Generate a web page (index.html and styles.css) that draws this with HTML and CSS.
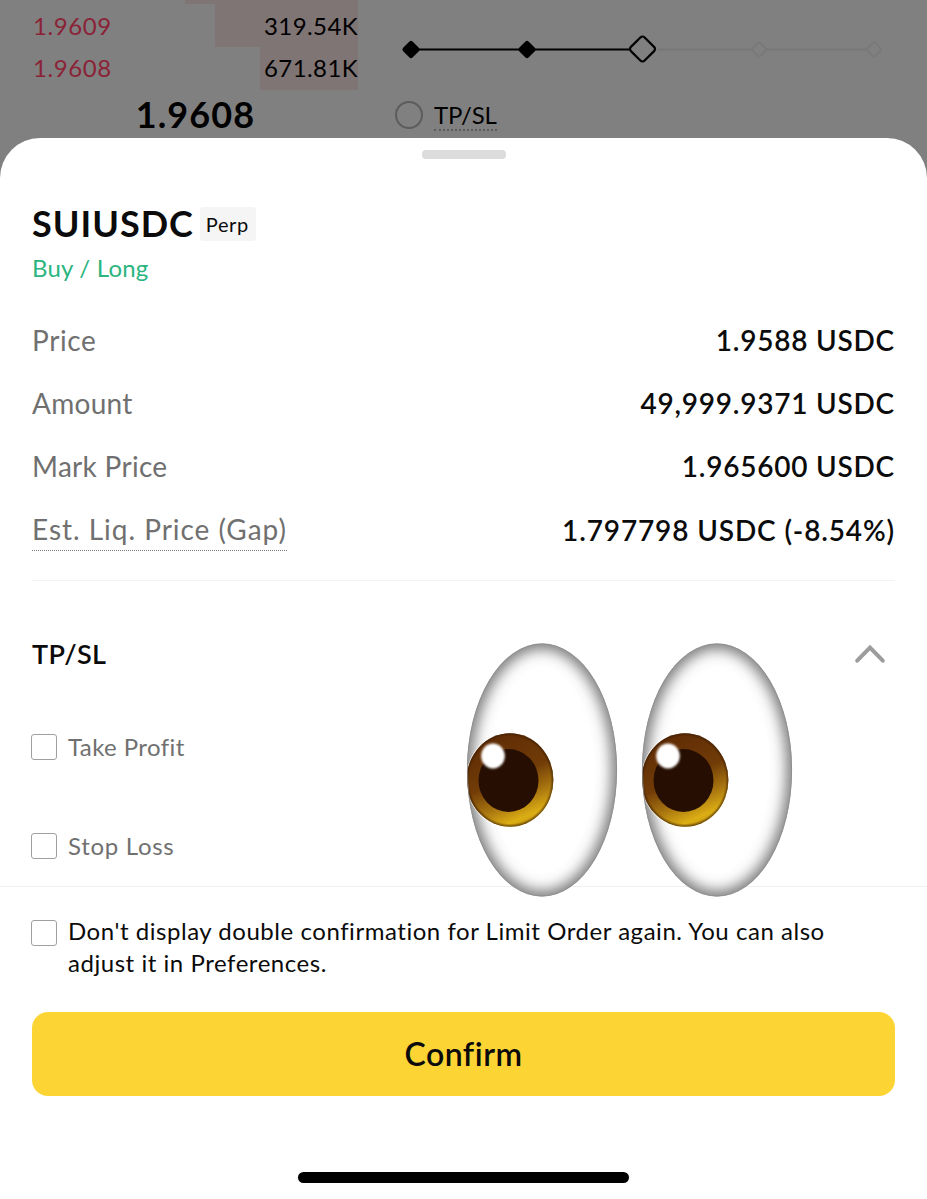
FILE: index.html
```
<!DOCTYPE html>
<html lang="en">
<head>
    <meta charset="UTF-8">
    <meta name="viewport" content="width=device-width, initial-scale=1.0">
    <title>Order Confirmation</title>
    <link rel="stylesheet" href="styles.css">
</head>
<body>
    <!-- Trading screen behind the sheet -->
    <div class="backdrop">
        <div class="order-book">
            <div class="book-row book-row-cut">
                <span class="depth" style="width: 173px"></span>
            </div>
            <div class="book-row">
                <span class="depth" style="width: 143px"></span>
                <span class="book-price">1.9609</span>
                <span class="book-amount">319.54K</span>
            </div>
            <div class="book-row book-row-last">
                <span class="depth" style="width: 98px"></span>
                <span class="book-price">1.9608</span>
                <span class="book-amount">671.81K</span>
            </div>
            <div class="last-price">1.9608</div>
        </div>

        <div class="order-form">
            <svg class="slider" width="500" height="40" viewBox="0 0 500 40" fill="none">
                <path d="M262 20.5H358M370 20.5H474" stroke="#777" stroke-width="2"/>
                <path d="M16 20.5H234" stroke="#000" stroke-width="2.2"/>
                <rect x="-6.8" y="-6.8" width="13.6" height="13.6" rx="2.5" transform="translate(16 20.5) rotate(45)" fill="#000"/>
                <rect x="-6.8" y="-6.8" width="13.6" height="13.6" rx="2.5" transform="translate(132 20.5) rotate(45)" fill="#000"/>
                <rect x="-9.7" y="-9.7" width="19.4" height="19.4" rx="3" transform="translate(247.5 20) rotate(45)" fill="#808080" stroke="#000" stroke-width="2.2"/>
                <rect x="-5.5" y="-5.5" width="11" height="11" rx="2" transform="translate(364 20.5) rotate(45)" fill="#808080" stroke="#797979" stroke-width="2"/>
                <rect x="-5.5" y="-5.5" width="11" height="11" rx="2" transform="translate(479 20.5) rotate(45)" fill="#808080" stroke="#797979" stroke-width="2"/>
            </svg>
            <div class="tpsl-toggle">
                <span class="radio"></span>
                <span class="tpsl-label">TP/SL</span>
            </div>
        </div>
    </div>

    <!-- Confirmation sheet -->
    <div class="sheet">
        <div class="handle"></div>

        <div class="content">
            <div class="heading">
                <h1 class="symbol">SUIUSDC</h1>
                <span class="tag">Perp</span>
            </div>
            <div class="side">Buy / Long</div>

            <div class="details">
                <div class="detail">
                    <span class="label label-price">Price</span>
                    <span class="value">1.9588 USDC</span>
                </div>
                <div class="detail">
                    <span class="label">Amount</span>
                    <span class="value">49,999.9371 USDC</span>
                </div>
                <div class="detail">
                    <span class="label">Mark Price</span>
                    <span class="value">1.965600 USDC</span>
                </div>
                <div class="detail">
                    <span class="label label-dotted">Est. Liq. Price (Gap)</span>
                    <span class="value value-gap">1.797798 USDC (-8.54%)</span>
                </div>
            </div>

            <div class="tpsl">
                <div class="tpsl-header">
                    <h2 class="tpsl-title">TP/SL</h2>
                    <svg class="chevron" width="32" height="20" viewBox="0 0 32 20" fill="none">
                        <path d="M3.2 16.7L16 3.6L28.8 16.7" stroke="#9c9c9c" stroke-width="4" stroke-linecap="round"/>
                    </svg>
                </div>
                <div class="option option-profit">
                    <span class="checkbox"></span>
                    <span class="option-label">Take Profit</span>
                </div>
                <div class="option option-loss">
                    <span class="checkbox"></span>
                    <span class="option-label">Stop Loss</span>
                </div>

                <!-- Eyes sticker -->
                <svg class="eyes" width="328" height="256" viewBox="0 0 328 256">
                    <defs>
                        <clipPath id="eyeClip">
                            <ellipse cx="76" cy="128" rx="75" ry="126.5"/>
                        </clipPath>
                        <filter id="soft" x="-20%" y="-20%" width="140%" height="140%">
                            <feGaussianBlur stdDeviation="8"/>
                        </filter>
                        <filter id="glint" x="-30%" y="-30%" width="160%" height="160%">
                            <feGaussianBlur stdDeviation="1.2"/>
                        </filter>
                        <linearGradient id="iris" x1="0.3" y1="0.05" x2="0.68" y2="1">
                            <stop offset="0" stop-color="#602c05"/>
                            <stop offset="0.45" stop-color="#713c07"/>
                            <stop offset="0.7" stop-color="#a87510"/>
                            <stop offset="0.9" stop-color="#dcae14"/>
                            <stop offset="1" stop-color="#c0930e"/>
                        </linearGradient>
                        <radialGradient id="irisEdge">
                            <stop offset="0.93" stop-color="#3a1c00" stop-opacity="0"/>
                            <stop offset="1" stop-color="#3a1c00" stop-opacity="0.7"/>
                        </radialGradient>
                        <g id="eye">
                            <ellipse cx="76" cy="128" rx="75" ry="126.5" fill="#fff"/>
                            <g clip-path="url(#eyeClip)">
                                <ellipse cx="76" cy="128" rx="79" ry="130.5" fill="none" stroke="#555" stroke-width="15" filter="url(#soft)"/>
                                <ellipse cx="44" cy="138" rx="44" ry="48" fill="#fff" opacity="0.85"/>
                                <ellipse cx="44" cy="138" rx="43.4" ry="46.8" fill="url(#iris)"/>
                                <ellipse cx="44" cy="138" rx="43.4" ry="46.8" fill="url(#irisEdge)"/>
                                <ellipse cx="42.5" cy="138.5" rx="30" ry="31.5" fill="#260f02"/>
                                <ellipse cx="27" cy="114" rx="11.8" ry="12.5" fill="#fff" filter="url(#glint)"/>
                            </g>
                            <ellipse cx="76" cy="128" rx="74.6" ry="126.1" fill="none" stroke="#8d8d8d" stroke-width="0.8"/>
                        </g>
                    </defs>
                    <use href="#eye"/>
                    <use href="#eye" x="175"/>
                </svg>
            </div>
        </div>

        <div class="footer">
            <div class="agreement">
                <span class="checkbox"></span>
                <p class="agreement-text">Don't display double confirmation for Limit Order again. You can also<br>adjust it in Preferences.</p>
            </div>
            <button class="confirm">Confirm</button>
        </div>

        <div class="home-indicator"></div>
    </div>
</body>
</html>
```
FILE: styles.css
```
/* ===== RESET & BASE STYLES ===== */
* {
    margin: 0;
    padding: 0;
    box-sizing: border-box;
}

body {
    height: 1199px;
    overflow: hidden;
    font-family: Lato, "Open Sans", sans-serif;
    background: #808080;
    color: #0b0b0b;
}

/* ===== BACKDROP ===== */
.backdrop {
    display: flex;
    height: 138px;
    color: #000;
    font-size: 24px;
}

.order-book {
    width: 358px;
    padding-left: 33px;
}

.book-row {
    position: relative;
    display: flex;
    justify-content: space-between;
    height: 43px;
    line-height: 43px;
}

.book-row-cut {
    height: 4px;
}

.book-row-last {
    line-height: 41px;
}

.depth {
    position: absolute;
    top: 0;
    right: 0;
    height: 100%;
    background: #807575;
}

.book-price {
    color: #8b2337;
    letter-spacing: 0.6px;
}

.book-price,
.book-amount {
    position: relative;
}

.book-amount {
    letter-spacing: 0.4px;
}

.last-price {
    font-size: 36px;
    font-weight: 700;
    letter-spacing: 1.1px;
    line-height: 48px;
    text-align: center;
}

.order-form {
    flex: 1;
    padding: 29px 0 0 37px;
}

.slider {
    display: block;
}

.tpsl-toggle {
    display: flex;
    align-items: center;
    gap: 12px;
    margin-top: 30px;
}

.radio {
    width: 28px;
    height: 28px;
    border: 2px solid #5c5c5c;
    border-radius: 50%;
}

.tpsl-label {
    padding-top: 2px;
    margin-left: -1px;
    border-bottom: 2px dotted #5c5c5c;
    letter-spacing: -0.2px;
    line-height: 28px;
}

/* ===== SHEET ===== */
.sheet {
    display: flex;
    flex-direction: column;
    height: 1061px;
    background: #fff;
    border-radius: 40px 40px 0 0;
}

.handle {
    width: 84px;
    height: 9px;
    margin: 12px auto 0;
    border-radius: 4px;
    background: #dcdcdc;
}

.content {
    height: 727px;
    padding: 48px 32px 0;
}

.heading {
    display: flex;
    align-items: center;
    gap: 6px;
    height: 34px;
}

.symbol {
    padding-bottom: 2px;
    font-size: 36px;
    font-weight: 700;
    letter-spacing: 1px;
    line-height: 34px;
}

.tag {
    padding: 0 7px 0 6px;
    border-radius: 3px;
    background: #f5f5f5;
    font-size: 20px;
    letter-spacing: 0.6px;
    line-height: 34px;
}

.side {
    margin-top: 11px;
    color: #2ab57f;
    font-size: 24px;
    letter-spacing: 0.2px;
    line-height: 32px;
}

.details {
    padding-bottom: 19px;
    margin-top: 24px;
    border-bottom: 1px solid #f3f3f3;
}

.detail {
    display: flex;
    align-items: center;
    justify-content: space-between;
    height: 63.3px;
    font-size: 28px;
}

.label {
    color: #707070;
    letter-spacing: 0.3px;
}

.label-price {
    letter-spacing: 0.6px;
}

.label-dotted {
    padding-bottom: 4px;
    margin-top: 4px;
    border-bottom: 1.5px dotted #777;
    letter-spacing: 0.97px;
    line-height: 34px;
}

.value {
    font-weight: 600;
    letter-spacing: 0.78px;
}

.value-gap {
    letter-spacing: 0.87px;
}

/* ===== TP/SL ===== */
.tpsl {
    position: relative;
}

.tpsl-header {
    display: flex;
    align-items: center;
    justify-content: space-between;
    height: 34px;
    margin-top: 56px;
    padding-right: 9px;
}

.tpsl-title {
    padding-bottom: 2px;
    font-size: 27px;
    font-weight: 600;
    letter-spacing: 0.4px;
}

.option {
    display: flex;
    align-items: center;
    gap: 11px;
    height: 32px;
    color: #707070;
    font-size: 24px;
    letter-spacing: 0.4px;
}

.option-profit {
    margin-top: 59px;
}

.option-loss {
    margin-top: 67px;
    letter-spacing: 0.7px;
}

.checkbox {
    flex: none;
    width: 26px;
    height: 26px;
    margin-left: -1px;
    border: 1.5px solid #a0a0a0;
    border-radius: 3px;
}

.option .checkbox {
    margin-top: 2px;
}

.eyes {
    position: absolute;
    left: 434px;
    top: 5px;
}

/* ===== FOOTER ===== */
.footer {
    padding: 28px 32px 0;
    border-top: 1px solid #f0f0f0;
}

.agreement {
    display: flex;
    gap: 11px;
}

.agreement .checkbox {
    margin-top: 5px;
}

.agreement-text {
    font-size: 24px;
    letter-spacing: 0.54px;
    line-height: 32px;
    white-space: nowrap;
}

.confirm {
    display: block;
    width: 100%;
    height: 84px;
    padding-bottom: 2px;
    margin-top: 33px;
    border: none;
    border-radius: 16px;
    background: #fcd535;
    color: #0b0b0b;
    font-family: inherit;
    font-size: 32px;
    font-weight: 600;
    letter-spacing: 0.5px;
}

.home-indicator {
    width: 331px;
    height: 11px;
    margin: 76px auto 0;
    border-radius: 6px;
    background: #000;
}
```
